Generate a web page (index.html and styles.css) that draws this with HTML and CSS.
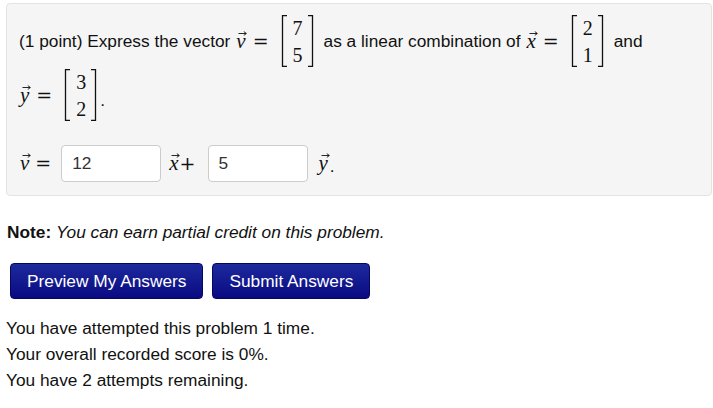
FILE: index.html
```
<!DOCTYPE html>
<html>
<head>
<meta charset="utf-8">
<link rel="stylesheet" href="styles.css">
</head>
<body>
<div class="problem">
  <div class="row r1">
    <span class="txt">(1 point) Express the vector</span>
    <span class="vec">v<svg class="arr" viewBox="0 0 9 5"><path d="M0.5 2.5 H8 M5.8 0.6 L8.4 2.5 L5.8 4.4" /></svg></span>
    <span class="eq">=</span>
    <span class="matrix">
      <svg class="br" viewBox="0 0 7 52"><path d="M6 0.7 H1.5 V51.3 H6"/></svg>
      <span class="col"><span>7</span><span>5</span></span>
      <svg class="br" viewBox="0 0 7 52"><path d="M1 0.7 H5.5 V51.3 H1"/></svg>
    </span>
    <span class="txt after">as a linear combination of</span>
    <span class="vec">x<svg class="arr" viewBox="0 0 9 5"><path d="M0.5 2.5 H8 M5.8 0.6 L8.4 2.5 L5.8 4.4" /></svg></span>
    <span class="eq">=</span>
    <span class="matrix">
      <svg class="br" viewBox="0 0 7 52"><path d="M6 0.7 H1.5 V51.3 H6"/></svg>
      <span class="col"><span>2</span><span>1</span></span>
      <svg class="br" viewBox="0 0 7 52"><path d="M1 0.7 H5.5 V51.3 H1"/></svg>
    </span>
    <span class="txt after">and</span>
  </div>
  <div class="row r2">
    <span class="vec">y<svg class="arr" viewBox="0 0 9 5"><path d="M0.5 2.5 H8 M5.8 0.6 L8.4 2.5 L5.8 4.4" /></svg></span>
    <span class="eq">=</span>
    <span class="matrix">
      <svg class="br" viewBox="0 0 7 52"><path d="M6 0.7 H1.5 V51.3 H6"/></svg>
      <span class="col"><span>3</span><span>2</span></span>
      <svg class="br" viewBox="0 0 7 52"><path d="M1 0.7 H5.5 V51.3 H1"/></svg>
    </span>
    <span class="dot">.</span>
  </div>
  <div class="row r3">
    <span class="vec">v<svg class="arr" viewBox="0 0 9 5"><path d="M0.5 2.5 H8 M5.8 0.6 L8.4 2.5 L5.8 4.4" /></svg></span>
    <span class="eq">=</span>
    <input class="ans" type="text" value="12">
    <span class="vec">x<svg class="arr" viewBox="0 0 9 5"><path d="M0.5 2.5 H8 M5.8 0.6 L8.4 2.5 L5.8 4.4" /></svg></span>
    <span class="plus">+</span>
    <input class="ans" type="text" value="5">
    <span class="vec">y<svg class="arr" viewBox="0 0 9 5"><path d="M0.5 2.5 H8 M5.8 0.6 L8.4 2.5 L5.8 4.4" /></svg></span>
    <span class="dot2">.</span>
  </div>
</div>
<p class="note"><b>Note:</b> <i>You can earn partial credit on this problem.</i></p>
<div class="buttons">
  <button class="btn">Preview My Answers</button>
  <button class="btn">Submit Answers</button>
</div>
<div class="status">
  <div>You have attempted this problem 1 time.</div>
  <div>Your overall recorded score is 0%.</div>
  <div>You have 2 attempts remaining.</div>
</div>
</body>
</html>
```
FILE: styles.css
```
body {
  margin: 0;
  font-family: "Liberation Sans", Arial, sans-serif;
  font-size: 17.3px;
  color: #111;
  background: #fff;
}
.problem {
  margin: 3px 1px 0 6px;
  border: 1px solid #e3e3e3;
  border-radius: 4px;
  background: #f5f5f5;
  padding: 11px 12px 11px 12px;
  height: 169px;
}
.row {
  display: flex;
  align-items: center;
}
.r1 { height: 52px; }
.r2 { height: 52px; margin-top: 2px; }
.r3 { margin-top: 24px; height: 37px; }
.txt { white-space: pre; }
.after { margin-left: 10px; }
.vec, .col {
  font-family: "Liberation Serif", "Times New Roman", serif;
}
.eq, .plus {
  font-family: "DejaVu Serif", serif;
}
.vec {
  position: relative;
  display: inline-block;
  font-style: italic;
  font-size: 21px;
  margin-left: 6px;
  margin-right: 1px;
  line-height: 1;
}
.r2 .vec, .r3 .vec:first-child { margin-left: 1px; }
.arr {
  position: absolute;
  left: 2px;
  top: 0px;
  width: 9px;
  height: 5px;
  fill: none;
  stroke: #111;
  stroke-width: 0.9;
}
.eq, .plus {
  font-size: 19px;
  line-height: 1;
  margin-left: 6px;
}
.eq { margin-right: 12px; }
.plus { margin-left: 0; margin-right: 12px; }
.r3 .eq { margin-left: 5px; margin-right: 10px; }
.matrix {
  display: inline-flex;
  align-items: stretch;
  height: 52px;
}
.br {
  width: 7px;
  height: 52px;
  fill: none;
  stroke: #111;
  stroke-width: 1.3;
}
.col {
  display: flex;
  flex-direction: column;
  justify-content: space-between;
  font-size: 20px;
  line-height: 24px;
  padding: 1px 4px 0 5px;
}
.dot { margin-left: 3px; margin-top: 10px; }
.dot2 { margin-left: 1px; margin-top: 6px; }
.ans {
  width: 100px;
  height: 37px;
  box-sizing: border-box;
  border: 1px solid #cccccc;
  border-radius: 4px;
  background: #fff;
  font-family: "Liberation Sans", Arial, sans-serif;
  font-size: 17.3px;
  color: #333;
  padding: 0 10px;
  margin: 0;
}
.r3 .vec:not(:first-child) { margin-left: 8px; }
.r3 .ans:last-of-type + .vec { margin-left: 11px; }
.note {
  margin: 26px 0 0 7px;
  line-height: 20px;
}
.buttons {
  display: flex;
  gap: 9px;
  margin: 21px 0 0 10px;
}
.btn {
  height: 36px;
  padding: 0 16px;
  border: 1px solid #070760;
  border-radius: 4px;
  background: linear-gradient(#1c2a9c, #0a0a82);
  color: #fff;
  font-family: "Liberation Sans", Arial, sans-serif;
  font-size: 17.3px;
}
.status {
  margin: 16px 0 0 6px;
  line-height: 26px;
}
```
